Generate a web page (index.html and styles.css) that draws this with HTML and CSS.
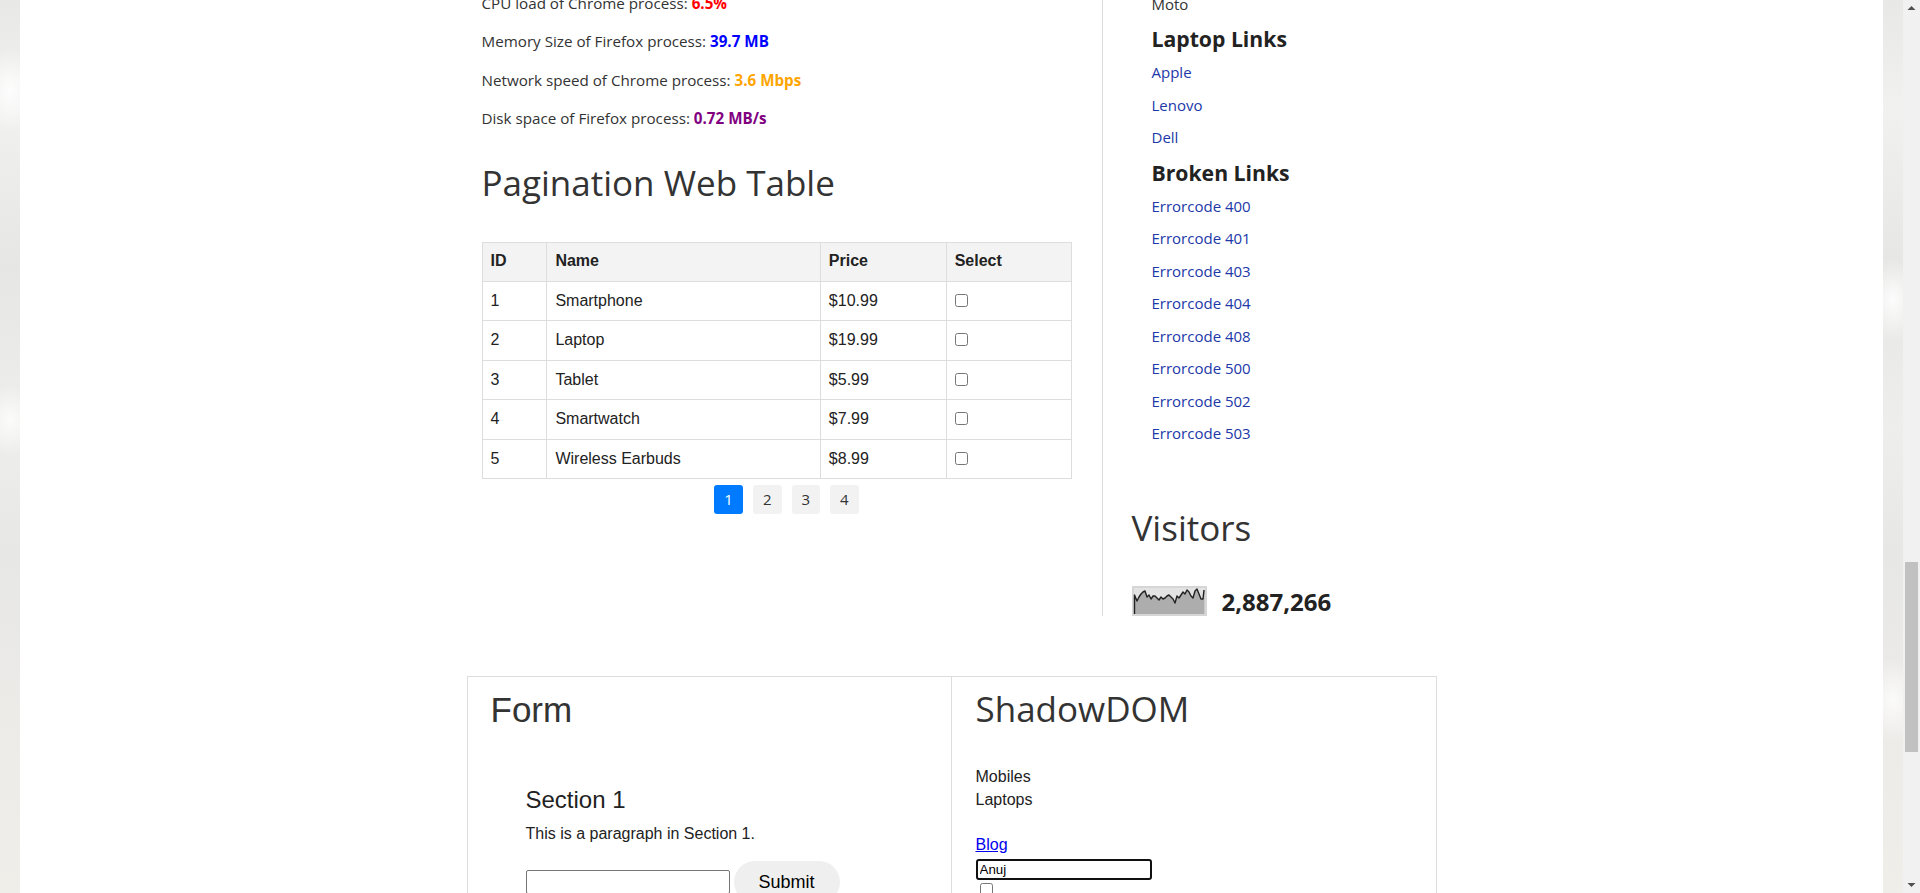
FILE: index.html
```html
<!DOCTYPE html>
<html lang="en">
<head>
<meta charset="utf-8">
<title>Automation Testing Practice</title>
<link rel="stylesheet" href="styles.css">
</head>
<body>
<div class="page">
  <div class="site">
    <div class="wrap">
      <div class="columns">
        <main class="main">
          <p>CPU load of Chrome process: <b class="v-red">6.5%</b></p>
          <p>Memory Size of Firefox process: <b class="v-blue">39.7 MB</b></p>
          <p>Network speed of Chrome process: <b class="v-orange">3.6 Mbps</b></p>
          <p>Disk space of Firefox process: <b class="v-purple">0.72 MB/s</b></p>
          <h2 class="title">Pagination Web Table</h2>
          <table class="ptable">
            <colgroup>
              <col class="c-id"><col class="c-name"><col class="c-price"><col class="c-sel">
            </colgroup>
            <thead>
              <tr><th>ID</th><th>Name</th><th>Price</th><th>Select</th></tr>
            </thead>
            <tbody>
              <tr><td>1</td><td>Smartphone</td><td>$10.99</td><td><input type="checkbox" class="cb"></td></tr>
              <tr><td>2</td><td>Laptop</td><td>$19.99</td><td><input type="checkbox" class="cb"></td></tr>
              <tr><td>3</td><td>Tablet</td><td>$5.99</td><td><input type="checkbox" class="cb"></td></tr>
              <tr><td>4</td><td>Smartwatch</td><td>$7.99</td><td><input type="checkbox" class="cb"></td></tr>
              <tr><td>5</td><td>Wireless Earbuds</td><td>$8.99</td><td><input type="checkbox" class="cb"></td></tr>
            </tbody>
          </table>
          <ul class="pagination">
            <li><a href="#" class="active">1</a></li>
            <li><a href="#">2</a></li>
            <li><a href="#">3</a></li>
            <li><a href="#">4</a></li>
          </ul>
        </main>
        <aside class="sidebar">
          <div class="links">
            <ul class="linklist first">
              <li><a href="#" class="plain">Moto</a></li>
            </ul>
            <h3 class="side-head">Laptop Links</h3>
            <ul class="linklist">
              <li><a href="#">Apple</a></li>
              <li><a href="#">Lenovo</a></li>
              <li><a href="#">Dell</a></li>
            </ul>
            <h3 class="side-head">Broken Links</h3>
            <ul class="linklist">
              <li><a href="#">Errorcode 400</a></li>
              <li><a href="#">Errorcode 401</a></li>
              <li><a href="#">Errorcode 403</a></li>
              <li><a href="#">Errorcode 404</a></li>
              <li><a href="#">Errorcode 408</a></li>
              <li><a href="#">Errorcode 500</a></li>
              <li><a href="#">Errorcode 502</a></li>
              <li><a href="#">Errorcode 503</a></li>
            </ul>
          </div>
          <div class="visitors">
            <h2 class="title vis-title">Visitors</h2>
            <div class="counter">
              <svg class="spark" width="75" height="30" viewBox="0 0 75 30">
                <rect x="0" y="0" width="75" height="30" fill="#d6d6d6"/>
                <rect x="2" y="2" width="71" height="26" fill="#e3e3e3"/>
                <path d="M2.5 28 L2.5 9 L5 15 L7 11 L9 8 L11 6 L13 5 L15 11 L17 9 L19 13 L21 10 L23 10 L25 12 L27 14 L29 11 L31 13 L33 12 L35 10 L37 9 L39 11 L41 13 L43 17 L45 10 L47 12 L49 9 L51 6 L53 8 L55 4 L57 6 L59 10 L61 12 L63 5 L65 3 L67 8 L69 13 L71 13 L72 4 L72.5 4 L72.5 28 Z" fill="#adadad"/>
                <path d="M2.5 28 L2.5 9 L5 15 L7 11 L9 8 L11 6 L13 5 L15 11 L17 9 L19 13 L21 10 L23 10 L25 12 L27 14 L29 11 L31 13 L33 12 L35 10 L37 9 L39 11 L41 13 L43 17 L45 10 L47 12 L49 9 L51 6 L53 8 L55 4 L57 6 L59 10 L61 12 L63 5 L65 3 L67 8 L69 13 L71 13 L72 4" fill="none" stroke="#222" stroke-width="1.4" stroke-linejoin="round"/>
              </svg>
              <span class="count">2,887,266</span>
            </div>
          </div>
        </aside>
      </div>
      <div class="box">
        <section class="form-col">
          <h2 class="form-title">Form</h2>
          <div class="section">
            <h3 class="sec-head">Section 1</h3>
            <p class="sec-text">This is a paragraph in Section 1.</p>
            <div class="sec-row">
              <input type="text" class="sec-input">
              <button type="button" class="sec-btn">Submit</button>
            </div>
          </div>
        </section>
        <section class="shadow-col">
          <h2 class="title shadow-title">ShadowDOM</h2>
          <div class="shadow-body">
            <div class="sline">Mobiles</div>
            <div class="sline">Laptops</div>
            <div class="sline">&nbsp;</div>
            <div class="sline"><a href="#" class="blog">Blog</a></div>
            <input type="text" class="shadow-input" value="Anuj">
            <input type="checkbox" class="shadow-cb">
          </div>
        </section>
      </div>
    </div>
  </div>
</div>
<div class="scrollbar">
  <div class="sb-btn">
    <svg width="17" height="17" viewBox="0 0 17 17"><polygon points="4.5,10 8.5,6 12.5,10" fill="#505050"/></svg>
  </div>
  <div class="sb-track"><div class="sb-thumb"></div></div>
  <div class="sb-btn">
    <svg width="17" height="17" viewBox="0 0 17 17"><polygon points="4.5,7 12.5,7 8.5,11" fill="#505050"/></svg>
  </div>
</div>
</body>
</html>
```

FILE: styles.css
```css
html, body {
  margin: 0;
  padding: 0;
}
body {
  display: flex;
  height: 893px;
  overflow: hidden;
  font-family: "Open Sans", "Liberation Sans", sans-serif;
  color: #333;
}
.page {
  flex: 1;
  padding: 0 20px;
  background:
    radial-gradient(ellipse 40px 60px at 10px 90px, rgba(255,255,255,0.9), rgba(255,255,255,0) 70%),
    radial-gradient(ellipse 40px 50px at 10px 420px, rgba(255,255,255,0.8), rgba(255,255,255,0) 70%),
    radial-gradient(ellipse 40px 60px at 1893px 300px, rgba(255,255,255,0.9), rgba(255,255,255,0) 70%),
    radial-gradient(ellipse 40px 60px at 1893px 700px, rgba(255,255,255,0.8), rgba(255,255,255,0) 70%),
    linear-gradient(180deg, #e8e8e6 0%, #f1f1f0 12%, #e6e6e5 30%, #eeeeec 48%, #e7e7e6 62%, #ecebe8 80%, #f0eee9 100%);
}
.site {
  height: 893px;
  overflow: hidden;
  background: #fff;
}
.wrap {
  width: 970px;
  margin: 0 auto;
}
.columns {
  display: flex;
  margin-top: -8px;
}
.main {
  width: 620px;
  padding: 0 15px;
  box-sizing: border-box;
}
.main p {
  margin: 0 0 15px;
  font-size: 15.2px;
  line-height: 23.4px;
  color: #333;
}
.v-red { color: #ff0000; }
.v-blue { color: #0000ff; }
.v-orange { color: #ffa500; }
.v-purple { color: #800080; }

.title {
  font-family: "Open Sans", sans-serif;
  font-weight: 400;
  font-size: 35px;
  line-height: 48px;
  color: #333;
  margin: 28px 0 35px;
}

.ptable {
  width: 590px;
  border-collapse: collapse;
  font-family: "Liberation Sans", Arial, sans-serif;
  font-size: 16px;
  color: #222;
}
.c-id { width: 65px; }
.c-name { width: 274px; }
.c-price { width: 126px; }
.c-sel { width: 125px; }
.ptable th,
.ptable td {
  border: 1px solid #ddd;
  padding: 10px 8px;
  text-align: left;
  line-height: 18.4px;
}
.ptable th {
  background: #f3f3f3;
  font-weight: 700;
  padding: 9px 8px 11px;
}
.cb {
  margin: 0;
  width: 13px;
  height: 13px;
  vertical-align: -1px;
}

.pagination {
  list-style: none;
  margin: 5.6px 0 0;
  padding: 0 0 0 20px;
  display: flex;
  justify-content: center;
}
.pagination a {
  display: block;
  margin: 0 5px;
  padding: 5px 10px;
  line-height: 19px;
  font-size: 15px;
  background: #f2f2f2;
  color: #333;
  text-decoration: none;
  border-radius: 3px;
}
.pagination a.active {
  background: #007bff;
  color: #fff;
}

.sidebar {
  flex: 1;
  margin-left: 15px;
  border-left: 1px solid #dcdcdc;
  padding-left: 29px;
}
.links {
  padding-left: 20px;
}
.linklist {
  list-style: none;
  margin: 0;
  padding: 0;
}
.linklist.first {
  margin-top: -4.5px;
}
.linklist li {
  padding: 5px 0;
  line-height: 22.5px;
  font-size: 15px;
}
.linklist a {
  color: #2138a8;
  text-decoration: none;
}
.linklist a.plain {
  color: #333;
}
.side-head {
  font-size: 21.2px;
  font-weight: 700;
  line-height: 28px;
  margin: 5px 0 3px;
  color: #222;
}
.vis-title {
  margin: 54.5px 0 34px;
}
.counter {
  display: flex;
  align-items: center;
  height: 30px;
}
.spark {
  display: block;
  flex: none;
}
.count {
  margin-left: 15px;
  font-size: 24px;
  font-weight: 700;
  line-height: 30px;
  color: #222;
  position: relative;
  top: 1px;
}

.box {
  margin-top: 60px;
  display: grid;
  grid-template-columns: 1fr 1fr;
  border: 1px solid #ddd;
  border-bottom: none;
  height: 300px;
}
.form-col {
  border-right: 1px solid #ddd;
  padding: 13px 22px 0 23px;
  font-family: "Liberation Sans", Arial, sans-serif;
  color: #222;
}
.form-title {
  font-family: "Liberation Sans", Arial, sans-serif;
  font-weight: 400;
  font-size: 35px;
  line-height: 40px;
  color: #333;
  margin: 0;
}
.section {
  margin-left: 35px;
}
.sec-head {
  font-size: 24px;
  font-weight: 400;
  line-height: 28px;
  margin: 56px 0 11px;
}
.sec-text {
  font-size: 16px;
  line-height: 18.4px;
  margin: 0 0 18px;
}
.sec-row {
  display: flex;
  align-items: center;
  gap: 4px;
}
.sec-input {
  width: 204px;
  height: 24px;
  box-sizing: border-box;
  border: 1px solid #767676;
  border-radius: 2px;
  margin: 0;
  padding: 1px 2px;
}
.sec-btn {
  font-family: "Liberation Sans", Arial, sans-serif;
  font-size: 18px;
  line-height: 20px;
  padding: 11px 25px;
  background: #efefef;
  color: #000;
  border: none;
  border-radius: 21px;
  margin: 0;
}

.shadow-col {
  padding: 8px 20px 0 24px;
  font-family: "Liberation Sans", Arial, sans-serif;
  color: #222;
}
.shadow-title {
  margin: 0;
}
.shadow-body {
  margin-top: 33.3px;
  font-size: 16px;
  line-height: 22.4px;
}
.blog {
  color: #0000ee;
  text-decoration: underline;
}
.shadow-input {
  display: block;
  margin: 2.6px 0 0;
  width: 176px;
  height: 21px;
  box-sizing: border-box;
  border: 2px solid #101010;
  border-radius: 3px;
  padding: 0 2px;
  font-family: "Liberation Sans", Arial, sans-serif;
  font-size: 13.33px;
  color: #000;
  outline: none;
}
.shadow-cb {
  display: block;
  margin: 3px 0 0 4px;
  width: 13px;
  height: 13px;
}

.scrollbar {
  width: 17px;
  flex: none;
  display: flex;
  flex-direction: column;
  background: #f1f1f1;
}
.sb-btn {
  height: 17px;
  flex: none;
}
.sb-btn svg {
  display: block;
}
.sb-track {
  flex: 1;
}
.sb-thumb {
  margin: 545px 2px 0;
  height: 190px;
  background: #c1c1c1;
}
```
